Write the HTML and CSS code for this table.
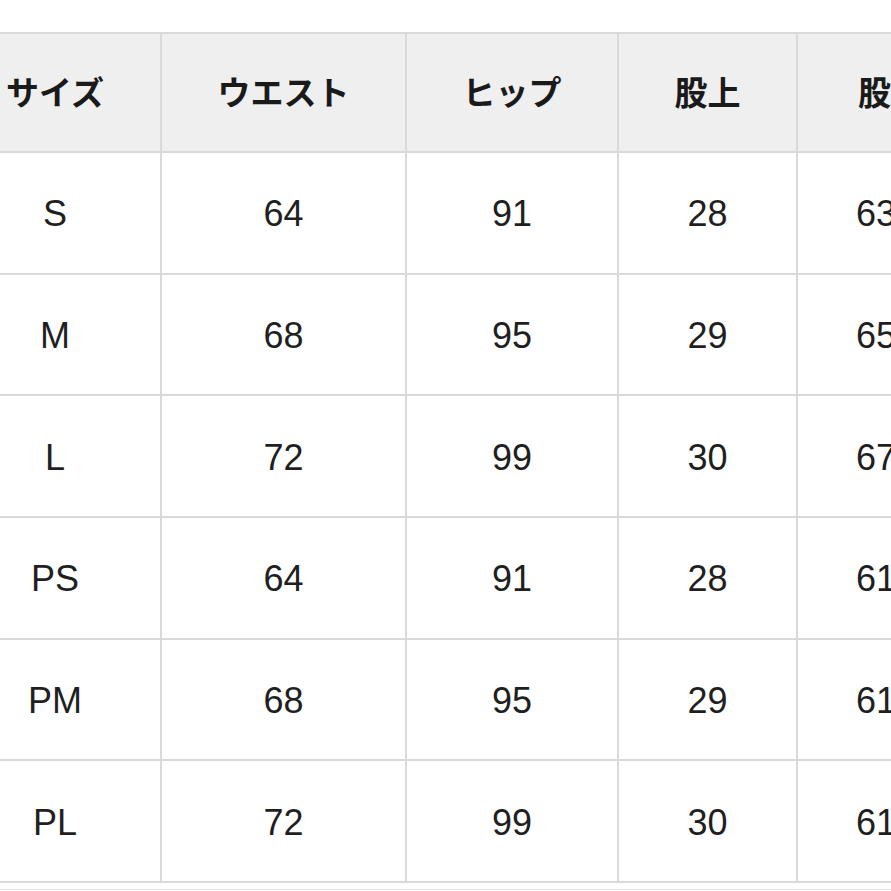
FILE: index.html
```html
<!DOCTYPE html>
<html lang="ja">
<head>
<meta charset="utf-8">
<title>サイズ表</title>
<link rel="stylesheet" href="styles.css">
</head>
<body>
<div class="sheet">
  <div class="grid">
    <div class="cell head">サイズ</div>
    <div class="cell head">ウエスト</div>
    <div class="cell head">ヒップ</div>
    <div class="cell head">股上</div>
    <div class="cell head">股下</div>

    <div class="cell">S</div><div class="cell">64</div><div class="cell">91</div><div class="cell">28</div><div class="cell">63.5</div>
    <div class="cell">M</div><div class="cell">68</div><div class="cell">95</div><div class="cell">29</div><div class="cell">65.5</div>
    <div class="cell">L</div><div class="cell">72</div><div class="cell">99</div><div class="cell">30</div><div class="cell">67.5</div>
    <div class="cell">PS</div><div class="cell">64</div><div class="cell">91</div><div class="cell">28</div><div class="cell">61.5</div>
    <div class="cell">PM</div><div class="cell">68</div><div class="cell">95</div><div class="cell">29</div><div class="cell">61.5</div>
    <div class="cell">PL</div><div class="cell">72</div><div class="cell">99</div><div class="cell">30</div><div class="cell">61.5</div>
  </div>
  <div class="after"></div>
</div>
</body>
</html>
```
FILE: styles.css
```css
html, body {
  margin: 0;
  padding: 0;
  background: #ffffff;
  overflow: hidden;
}

.sheet {
  padding-top: 32px;
}

.grid {
  display: grid;
  grid-template-columns: 210px 243px 210px 177px 186px;
  grid-template-rows: 117px repeat(6, 119.67px);
  gap: 2px;
  width: max-content;
  margin-left: -52px;
  border: 2px solid #d9d9d9;
  background: #d9d9d9;
}

.cell {
  display: flex;
  align-items: center;
  justify-content: center;
  padding-top: 3px;
  background: #ffffff;
  color: #1f1f1f;
  font-family: "Liberation Sans", Arial, sans-serif;
  font-size: 36px;
  white-space: nowrap;
  overflow: hidden;
}

.cell.head {
  padding-top: 0;
  padding-bottom: 3px;
  background: #efefef;
  color: #1a1a1a;
  font-family: "Noto Sans CJK JP", sans-serif;
  font-weight: 700;
  font-size: 33px;
}

.after {
  margin-top: 6px;
  height: 1px;
  background: #e4e4e4;
}
```
